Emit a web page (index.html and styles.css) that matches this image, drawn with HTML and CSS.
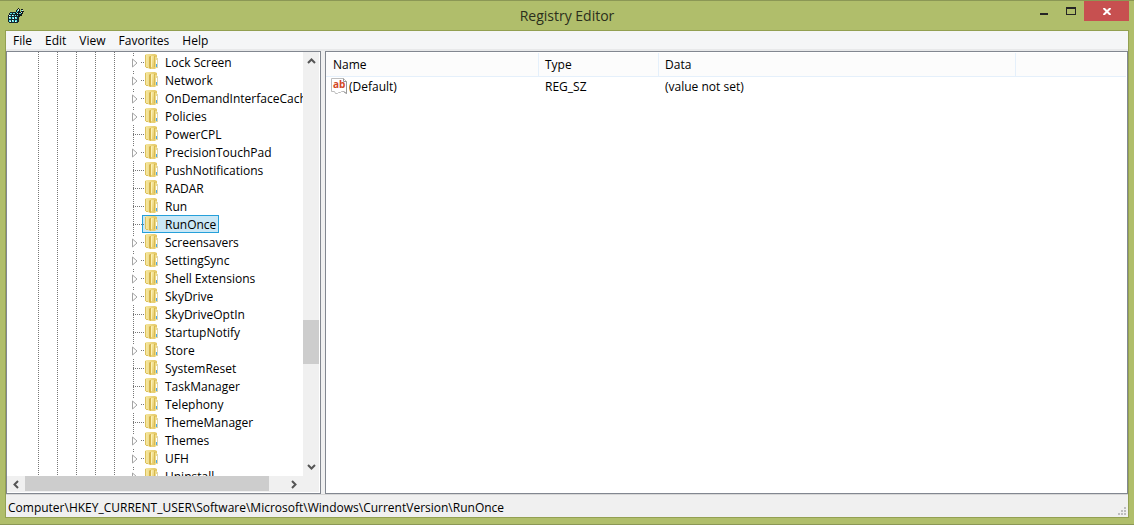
FILE: index.html
```html
<!DOCTYPE html>
<html lang="en">
<head>
<meta charset="utf-8">
<title>Registry Editor</title>
<link rel="stylesheet" href="styles.css">
</head>
<body>
<svg class="defs" aria-hidden="true">
  <defs>
    <linearGradient id="gold" x1="0" x2="1" y1="0" y2="0"><stop offset="0" stop-color="#f7eaa6"/><stop offset="1" stop-color="#e3c55f"/></linearGradient>
    <linearGradient id="flap" x1="0" x2="1" y1="0" y2="1"><stop offset="0" stop-color="#fdf3b8"/><stop offset="1" stop-color="#e0c055"/></linearGradient>
  </defs>
  <symbol id="folder" viewBox="0 0 16 16">
    <path d="M0 8h1v1H0z" fill="#777"/>
    <path d="M2 1l1-1h9l2 1v12l-2 2H7l-5-2z" fill="url(#gold)"/>
    <path d="M2 1h1v12H2zM3 13h2v1H3z" fill="#dcc05c"/>
    <path d="M7 2h5v11l-5 2z" fill="url(#flap)"/>
    <path d="M7 2h1v13l-2-1V3z" fill="#d5b44a"/>
    <path d="M8 3h1v10H8z" fill="#fbf2bc"/>
    <path d="M11 2h1v11h-1z" fill="#d8b94f"/>
    <path d="M12 3h2v11h-2z" fill="#eedb8a"/>
    <path d="M13 6h1v4h-1z" fill="#fff"/>
    <path d="M13 10h1v3h-1z" fill="#4aa8ea"/>
    <path d="M14 4h1v10h-1z" fill="#dcd4b0"/>
  </symbol>
  <symbol id="arrow" viewBox="0 0 6 10"><path d="M.5 1v8l4.500-4z" fill="#fff" stroke="#a3a3a3"/></symbol>
</svg>
<div class="window">
  <header class="titlebar">
    <svg class="app-icon" viewBox="0 0 16 16" shape-rendering="crispEdges">
      <path d="M1 5h1V4h6v1h1v1h2v8h-1v1H1v-1H0V7h1z" fill="#14272c"/>
      <path d="M2 5h2v1H2zM5 5h2v1H5zM1 7h2v1H1zM4 7h2v1H4zM7 7h1v1H7zM1 9h2v2H1zM4 9h2v2H4zM7 9h2v2H7zM1 12h2v2H1zM4 12h2v2H4zM7 12h2v2H7z" fill="#5be0e8"/>
      <path d="M1 7h1v1H1zM4 7h1v1H4zM1 9h1v1H1zM5 10h1v1H5zM7 9h1v1H7zM2 13h1v1H2zM4 12h1v1H4zM7 13h1v1H7z" fill="#effffd"/>
      <path d="M9 1h1V0h1v1h1v3h1V1h2v2h1v1h-1v2h-1v2h-2v1h-2V8H8V6H7V4h1V2h1z" fill="#111b1b"/>
      <path d="M9 2h1v2H9zM8 4h1v1H8zM13 2h1v1h-1zM11 5h2v1h-2zM9 7h1v1H9z" fill="#4dd4dc"/>
      <path d="M10 1h1v2h-1zM14 2h1v1h-1zM9 5h1v1H9zM13 4h1v1h-1z" fill="#dce9df"/>
    </svg>
    <h1 class="title">Registry Editor</h1>
    <div class="controls">
      <button class="control" aria-label="Minimize"><svg width="8" height="10"><path d="M0 8h8v2H0z" fill="#252525"/></svg></button>
      <button class="control" aria-label="Maximize"><svg width="10" height="8"><path d="M0 0h10v8H0zM1 2v5h8V2z" fill="#252525" fill-rule="evenodd"/></svg></button>
      <button class="control close" aria-label="Close"><svg width="8" height="7"><path d="M.5 0L7.500 7M7.500 0L.5 7" stroke="#fff" stroke-width="2"/></svg></button>
    </div>
  </header>
  <main class="client">
    <nav class="menubar">
      <button>File</button><button>Edit</button><button>View</button><button>Favorites</button><button>Help</button>
    </nav>
    <div class="panes">
      <section class="tree-pane" aria-label="Keys">
        <div class="tree-view">
          <ul class="tree" id="tree"></ul>
        </div>
        <div class="vscroll">
          <button aria-label="Scroll up"><svg width="9" height="6"><path d="M1 5l3.500-3.500L8 5" fill="none" stroke="#555" stroke-width="2"/></svg></button>
          <div class="vtrack"><div class="vthumb"></div></div>
          <button aria-label="Scroll down"><svg width="9" height="6"><path d="M1 1l3.500 3.500L8 1" fill="none" stroke="#555" stroke-width="2"/></svg></button>
        </div>
        <div class="hscroll">
          <button aria-label="Scroll left"><svg width="6" height="9"><path d="M5 1L1.500 4.500 5 8" fill="none" stroke="#555" stroke-width="2"/></svg></button>
          <div class="htrack"><div class="hthumb"></div></div>
          <button aria-label="Scroll right"><svg width="6" height="9"><path d="M1 1l3.500 3.500L1 8" fill="none" stroke="#555" stroke-width="2"/></svg></button>
        </div>
      </section>
      <section class="value-pane" aria-label="Values">
        <table class="values">
          <colgroup><col class="col-name"><col class="col-type"><col class="col-data"><col></colgroup>
          <thead><tr><th>Name</th><th>Type</th><th>Data</th><th></th></tr></thead>
          <tbody><tr>
            <td class="name-cell"><div class="name">
              <svg class="string-icon" viewBox="0 0 16 16"><path d="M.5.500h12l3 3v12l-3-2h-2l-1 1h-2l-1 1h-2l-1-2h-3z" fill="#fff" stroke="#bdbdbd"/><path d="M12.500.500v3h3v12l-3-2" fill="none" stroke="#999"/><text x="2" y="10">ab</text></svg>
              <span>(Default)</span></div></td>
            <td>REG_SZ</td><td>(value not set)</td><td></td>
          </tr></tbody>
        </table>
      </section>
    </div>
    <footer class="statusbar">
      <span>Computer\HKEY_CURRENT_USER\Software\Microsoft\Windows\CurrentVersion\RunOnce</span>
      <svg class="grip" width="8" height="8"><path d="M6 0h2v2H6zM3 3h2v2H3zM6 3h2v2H6zM0 6h2v2H0zM3 6h2v2H3zM6 6h2v2H6z" fill="#bdbdbd"/></svg>
    </footer>
  </main>
</div>
<script src="tree.js"></script>
</body>
</html>
```
FILE: styles.css
```css
* { box-sizing: border-box; }
body { margin: 0; font: 12px/18px "Open Sans", "Noto Sans", sans-serif; color: #000; }
button { border: 0; padding: 0; background: none; font: inherit; color: inherit; }
.defs { position: absolute; width: 0; height: 0; }
svg { display: block; flex: none; }

.window {
  height: 100vh; display: flex; flex-direction: column;
  padding: 0 5px 6px; background: #b0be6b;
  border-top: 1px solid #8b9755; border-bottom: 1px solid #8b9755;
}
.titlebar { display: grid; grid-template-columns: 1fr auto 1fr; height: 29px; flex: none; }
.app-icon { width: 16px; height: 16px; margin: 7px 3px; }
.title { margin: 0; font-size: 14px; font-weight: 400; line-height: 29px; color: #2b2f1c; }
.controls { display: flex; justify-content: flex-end; height: 20px; }
.control { width: 27px; display: flex; justify-content: center; padding-top: 6px; }
.control:first-child { padding-top: 4px; }
.close { width: 45px; background: #c75050; padding-top: 7px; }

.client { flex: 1; min-height: 0; display: flex; flex-direction: column; border: 1px solid #93a052; background: #f0f0f0; }
.menubar { display: flex; height: 20px; flex: none; gap: 13px; padding: 0 7px; line-height: 20px; background: #f5f6f7; border-bottom: 2px solid #e8e9ea; }

.panes { flex: 1; min-height: 0; display: flex; gap: 4px; }
.tree-pane {
  width: 315px; flex: none; display: grid; padding: 0 1px 1px 0;
  grid-template: minmax(0, 1fr) 16px / minmax(0, 1fr) 16px;
  border: 1px solid #828790; background: #fff;
}
.tree-view {
  overflow: hidden; padding-top: 1px;
  background: repeating-linear-gradient(transparent 0 1px, #fff 1px 2px),
    linear-gradient(90deg, transparent 31px, #777 31px 32px, transparent 32px 50px, #777 50px 51px, transparent 51px 69px, #777 69px 70px, transparent 70px 88px, #777 88px 89px, transparent 89px 107px, #777 107px 108px, transparent 108px);
}
.tree { list-style: none; margin: 0; padding: 0 0 0 121px; }
.tree li { display: flex; height: 18px; white-space: nowrap; }
.twig {
  width: 14px; flex: none; display: flex; align-items: center; padding-left: 4px;
  background: repeating-linear-gradient(#777 0 1px, transparent 1px 2px) 5px 0 / 1px 18px no-repeat,
    repeating-linear-gradient(90deg, #777 0 1px, transparent 1px 2px) 5px 9px / 9px 1px no-repeat;
}
.twig.expandable {
  padding-top: 1px;
  background: repeating-linear-gradient(#777 0 1px, transparent 1px 2px) 5px 0 / 1px 3px no-repeat,
    repeating-linear-gradient(90deg, #777 0 1px, transparent 1px 2px) 13px 9px / 1px 1px no-repeat;
}
.twig svg { width: 6px; height: 10px; }
.key { display: flex; gap: 6px; border: 1px solid transparent; padding-right: 2px; line-height: 18px; }
.key svg { width: 16px; height: 16px; }
.key.selected { background: #cbe8f6; border-color: #26a0da; }

.vscroll, .hscroll { display: flex; background: #f0f0f0; }
.vscroll { flex-direction: column; }
.hscroll { grid-column: 1 / 3; padding-right: 16px; }
.vscroll button, .hscroll button { flex: none; display: grid; place-items: center; width: 16px; height: 16px; }
.vscroll button { height: 18px; }
.hscroll button { width: 18px; }
.vtrack { flex: 1; display: flex; flex-direction: column; }
.vtrack::before { content: ""; flex: 250; }
.vtrack::after { content: ""; flex: 94; }
.vthumb { flex: 44; background: #cdcdcd; }
.htrack { flex: 1; }
.hthumb { width: 94%; height: 15px; background: #cdcdcd; }

.value-pane { flex: 1; min-width: 0; border: 1px solid #828790; background: #fff; padding: 1px 1px 0 0; }
.values { width: 100%; table-layout: fixed; border-collapse: separate; border-spacing: 0; }
.col-name { width: 213px; }
.col-type { width: 120px; }
.col-data { width: 357px; }
.values th { height: 24px; padding: 0 6px; text-align: left; font-weight: 400; background: #fcfcfc; border-bottom: 1px solid #e5f0fb; border-right: 1px solid #e5f0fb; }
.values th:first-child { padding-left: 7px; }
.values th:last-child { border-right: 0; }
.values td { height: 20px; padding: 0 6px; }
.values .name-cell { padding: 0 5px; }
.name { display: flex; gap: 2px; }
.string-icon { width: 16px; height: 16px; }
.string-icon text { font: bold 10px "Open Sans", sans-serif; fill: #d24726; }

.statusbar { display: flex; justify-content: space-between; height: 23px; flex: none; padding: 4px 2px 0; border-top: 1px solid #d7d7d7; }
.grip { align-self: flex-end; margin-bottom: 2px; }
```
FILE: tree.js
```js
// A leading "+" marks a key that has subkeys.
const keys = ["+Lock Screen", "+Network", "+OnDemandInterfaceCache", "+Policies", "PowerCPL",
  "+PrecisionTouchPad", "PushNotifications", "RADAR", "Run", "RunOnce", "+Screensavers",
  "+SettingSync", "+Shell Extensions", "+SkyDrive", "SkyDriveOptIn", "StartupNotify", "+Store",
  "SystemReset", "TaskManager", "+Telephony", "ThemeManager", "+Themes", "+UFH", "+Uninstall"];

document.getElementById("tree").innerHTML = keys.map(key => {
  const expandable = key[0] === "+";
  const name = key.replace("+", "");
  const twig = expandable
    ? `<button class="twig expandable" aria-label="Expand ${name}"><svg><use href="#arrow"/></svg></button>`
    : `<span class="twig"></span>`;
  const selected = name === "RunOnce" ? " selected" : "";
  return `<li>${twig}<button class="key${selected}"><svg><use href="#folder"/></svg><span>${name}</span></button></li>`;
}).join("");
```
